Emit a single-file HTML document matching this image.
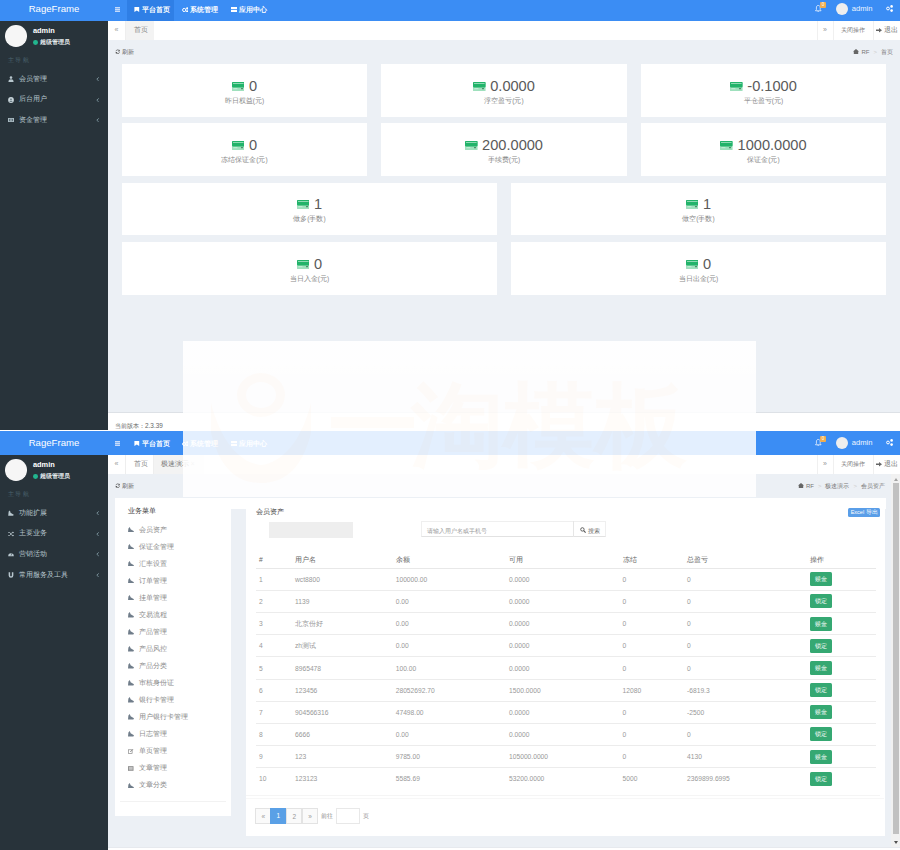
<!DOCTYPE html>
<html><head><meta charset="utf-8"><style>
*{margin:0;padding:0;box-sizing:border-box}
html,body{width:900px;height:850px;overflow:hidden;background:#fff;font-family:"Liberation Sans",sans-serif}
.clip{position:absolute;left:0;width:900px;overflow:hidden}
.scr{position:absolute;left:0;width:900px;height:440px;background:#ecf0f5}
.a{position:absolute;white-space:nowrap}
.hdr{position:absolute;left:0;top:0;width:900px;height:23.3px;background:#3b8df4}
.logo{position:absolute;left:0;top:0;width:108px;height:23.3px;color:#fff;font-size:9.6px;text-align:center;line-height:24px}
.navt{color:#fff;font-size:6.6px;line-height:8px;font-weight:bold}
.side{position:absolute;left:0;top:23.3px;width:108px;height:420px;background:#28333a}
.tabs{position:absolute;left:108px;top:23.3px;width:792px;height:19px;background:#fff}
.menu{color:#b8c7ce;font-size:6.6px;line-height:8px}
.foot{position:absolute;left:108px;top:415.1px;width:792px;height:20px;background:#fff;border-top:1px solid #dde1e6}
.card{position:absolute;background:#fff;height:52.5px}
.num{position:absolute;left:0;width:100%;text-align:center;top:12.8px;font-size:14.6px;color:#5a5a5a;line-height:18px}
.lbl{position:absolute;left:0;width:100%;text-align:center;top:32.5px;font-size:6.5px;color:#888;line-height:8px}
.ic{display:inline-block;width:12.6px;height:9.2px;vertical-align:0px;margin-right:4.5px}
.gray{color:#666}
</style></head><body>
<div class="clip" style="top:0;height:429.5px"><div class="scr" style="top:-2.8px"><div class="hdr"><div class="logo">RageFrame</div><svg class="a" style="left:114.7px;top:9.9px" width="5.7" height="5" viewBox="0 0 57 50"><rect y="0" width="57" height="14" fill="#c4dafb"/><rect y="18" width="57" height="14" fill="#c4dafb"/><rect y="36" width="57" height="14" fill="#c4dafb"/></svg><div class="a" style="left:127px;top:0;width:47px;height:23.3px;background:#2f7fe6"></div><svg class="a" style="left:134px;top:9.8px" width="5.6" height="5" viewBox="0 0 56 50"><path d="M4 0H52V50L28 36L4 50Z" fill="#fff"/></svg><div class="a navt" style="left:141.5px;top:8.6px">平台首页</div><svg class="a" style="left:181.6px;top:9.5px" width="6.7" height="5.5" viewBox="0 0 67 55"><circle cx="22" cy="30" r="16" fill="none" stroke="#fff" stroke-width="10"/><circle cx="52" cy="14" r="11" fill="#fff"/><circle cx="52" cy="44" r="11" fill="#fff"/></svg><div class="a navt" style="left:190.2px;top:8.6px">系统管理</div><svg class="a" style="left:230.5px;top:9.8px" width="6.5" height="5" viewBox="0 0 65 50"><rect x="0" y="0" width="65" height="21" fill="#fff"/><rect x="0" y="29" width="65" height="21" fill="#fff"/></svg><div class="a navt" style="left:238.7px;top:8.6px">应用中心</div><svg class="a" style="left:815px;top:7.8px" width="6.7" height="7.2" viewBox="0 0 67 72"><path d="M33 4C18 4 14 16 14 30V46L5 58H61L52 46V30C52 16 48 4 33 4Z" fill="none" stroke="#fff" stroke-width="7"/><path d="M25 62Q33 74 41 62" fill="none" stroke="#fff" stroke-width="7"/></svg><div class="a" style="left:820px;top:4.5px;width:6.1px;height:6.1px;background:#f0ad4e;border-radius:1px;color:#fff;font-size:4.5px;line-height:6px;text-align:center">0</div><div class="a" style="left:835.6px;top:5.8px;width:12.2px;height:12.2px;border-radius:50%;background:#eee"></div><div class="a" style="left:851.7px;top:7.1px;color:#eef5ff;font-size:7.6px;line-height:9px">admin</div><svg class="a" style="left:886px;top:8.2px" width="7.3" height="7" viewBox="0 0 73 70"><circle cx="20" cy="35" r="14" fill="none" stroke="#fff" stroke-width="10"/><circle cx="56" cy="14" r="13" fill="#fff"/><circle cx="56" cy="56" r="13" fill="#fff"/></svg></div><div class="side"></div><div class="a" style="left:5px;top:27.8px;width:21.5px;height:21.5px;border-radius:50%;background:#f6f6f6"></div><div class="a" style="left:33px;top:28.6px;color:#fff;font-size:7.4px;font-weight:bold;line-height:10px">admin</div><div class="a" style="left:33.2px;top:42.6px;width:4.8px;height:4.8px;border-radius:50%;background:#22b58e"></div><div class="a" style="left:40px;top:41px;color:#e8eef0;font-size:5.8px;line-height:8px;font-weight:bold">超级管理员</div><div class="a" style="left:8px;top:58.6px;color:#4b646f;font-size:5.6px;letter-spacing:1.4px;line-height:8px">主导航</div><svg class="a" style="left:7.8px;top:78.8px" width="6" height="6" viewBox="0 0 56 56"><circle cx="28" cy="15" r="12" fill="#b8c7ce"/><path d="M4 56C4 36 14 30 28 30C42 30 52 36 52 56Z" fill="#b8c7ce"/></svg><div class="a menu" style="left:19px;top:77.6px;font-size:6.6px">会员管理</div><svg class="a" style="left:96.2px;top:79.7px" width="3.4" height="4.4" viewBox="0 0 34 44"><path d="M28 4L8 22L28 40" fill="none" stroke="#8aa4af" stroke-width="8"/></svg><svg class="a" style="left:7.8px;top:99.4px" width="6" height="6" viewBox="0 0 56 56"><circle cx="28" cy="28" r="27" fill="#c8d4da"/><circle cx="28" cy="22" r="9" fill="#6d7f88"/><path d="M12 46C16 36 22 34 28 34C34 34 40 36 44 46Z" fill="#6d7f88"/></svg><div class="a menu" style="left:19px;top:98.2px;font-size:6.6px">后台用户</div><svg class="a" style="left:96.2px;top:100.3px" width="3.4" height="4.4" viewBox="0 0 34 44"><path d="M28 4L8 22L28 40" fill="none" stroke="#8aa4af" stroke-width="8"/></svg><svg class="a" style="left:7.8px;top:120.0px" width="6" height="6" viewBox="0 0 56 56"><rect x="0" y="10" width="56" height="36" fill="#b8c7ce"/><rect x="8" y="17" width="40" height="22" fill="#5d6f78"/><circle cx="28" cy="28" r="8" fill="#b8c7ce"/></svg><div class="a menu" style="left:19px;top:118.8px;font-size:6.6px">资金管理</div><svg class="a" style="left:96.2px;top:120.9px" width="3.4" height="4.4" viewBox="0 0 34 44"><path d="M28 4L8 22L28 40" fill="none" stroke="#8aa4af" stroke-width="8"/></svg><div class="tabs"></div><div class="a" style="left:108px;top:23.3px;width:18.3px;height:19px;border-right:1px solid #eee"></div><div class="a gray" style="left:114.5px;top:28.5px;font-size:7px;line-height:8px;color:#999">«</div><div class="a" style="left:126.3px;top:23.3px;width:27.6px;height:19px;background:#f3f3f3"></div><div class="a" style="left:133.5px;top:29px;font-size:6.6px;line-height:8px;color:#888">首页</div><div class="a" style="left:816.7px;top:23.3px;width:17.7px;height:19px;border-left:1px solid #f0f0f0;border-right:1px solid #f0f0f0"></div><div class="a" style="left:823px;top:28.5px;font-size:7px;line-height:8px;color:#999">»</div><div class="a" style="left:840.5px;top:29px;font-size:6.4px;line-height:8px;color:#777">关闭操作</div><div class="a" style="left:872.8px;top:23.3px;width:1px;height:19px;background:#f0f0f0"></div><svg class="a" style="left:876px;top:31px" width="6" height="4.5" viewBox="0 0 60 45"><path d="M0 14H30V0L60 22L30 45V31H0Z" fill="#666"/></svg><div class="a" style="left:883.5px;top:29px;font-size:6.6px;line-height:8px;color:#777">退出</div><svg class="a" style="left:115px;top:51.6px" width="5.5" height="5.5" viewBox="0 0 55 55"><path d="M46 20A20 20 0 0 0 9 22M9 35A20 20 0 0 0 46 33" fill="none" stroke="#555" stroke-width="7"/><path d="M46 6V24H30Z M9 49V31H25Z" fill="#555"/></svg><div class="a" style="left:122px;top:50.5px;font-size:6.4px;line-height:8px;color:#666">刷新</div><div class="a" style="right:7px;top:50.5px;font-size:6px;line-height:8px;color:#777;text-align:right"><svg width="6" height="5" viewBox="0 0 60 50" style="vertical-align:-0.5px;margin-right:2px"><path d="M30 0L60 26H52V50H8V26H0Z" fill="#666"/></svg>RF<span style="color:#ccc;margin:0 4px">&gt;</span><span>首页</span></div><div class="card" style="left:122px;top:66.8px;width:245px"><div class="num"><svg class="ic" viewBox="0 0 126 92"><rect x="0" y="0" width="126" height="92" rx="8" fill="#9fe0bd"/><rect x="0" y="0" width="126" height="54" rx="8" fill="#22b36a"/><rect x="10" y="10" width="106" height="6" fill="#d8f5e4"/><rect x="14" y="66" width="40" height="5" fill="#f0fff6"/><rect x="90" y="62" width="20" height="10" fill="#3a7a5a"/></svg>0</div><div class="lbl">昨日权益(元)</div></div><div class="card" style="left:381px;top:66.8px;width:246px"><div class="num"><svg class="ic" viewBox="0 0 126 92"><rect x="0" y="0" width="126" height="92" rx="8" fill="#9fe0bd"/><rect x="0" y="0" width="126" height="54" rx="8" fill="#22b36a"/><rect x="10" y="10" width="106" height="6" fill="#d8f5e4"/><rect x="14" y="66" width="40" height="5" fill="#f0fff6"/><rect x="90" y="62" width="20" height="10" fill="#3a7a5a"/></svg>0.0000</div><div class="lbl">浮空盈亏(元)</div></div><div class="card" style="left:641px;top:66.8px;width:245px"><div class="num"><svg class="ic" viewBox="0 0 126 92"><rect x="0" y="0" width="126" height="92" rx="8" fill="#9fe0bd"/><rect x="0" y="0" width="126" height="54" rx="8" fill="#22b36a"/><rect x="10" y="10" width="106" height="6" fill="#d8f5e4"/><rect x="14" y="66" width="40" height="5" fill="#f0fff6"/><rect x="90" y="62" width="20" height="10" fill="#3a7a5a"/></svg>-0.1000</div><div class="lbl">平仓盈亏(元)</div></div><div class="card" style="left:122px;top:126.1px;width:245px"><div class="num"><svg class="ic" viewBox="0 0 126 92"><rect x="0" y="0" width="126" height="92" rx="8" fill="#9fe0bd"/><rect x="0" y="0" width="126" height="54" rx="8" fill="#22b36a"/><rect x="10" y="10" width="106" height="6" fill="#d8f5e4"/><rect x="14" y="66" width="40" height="5" fill="#f0fff6"/><rect x="90" y="62" width="20" height="10" fill="#3a7a5a"/></svg>0</div><div class="lbl">冻结保证金(元)</div></div><div class="card" style="left:381px;top:126.1px;width:246px"><div class="num"><svg class="ic" viewBox="0 0 126 92"><rect x="0" y="0" width="126" height="92" rx="8" fill="#9fe0bd"/><rect x="0" y="0" width="126" height="54" rx="8" fill="#22b36a"/><rect x="10" y="10" width="106" height="6" fill="#d8f5e4"/><rect x="14" y="66" width="40" height="5" fill="#f0fff6"/><rect x="90" y="62" width="20" height="10" fill="#3a7a5a"/></svg>200.0000</div><div class="lbl">手续费(元)</div></div><div class="card" style="left:641px;top:126.1px;width:245px"><div class="num"><svg class="ic" viewBox="0 0 126 92"><rect x="0" y="0" width="126" height="92" rx="8" fill="#9fe0bd"/><rect x="0" y="0" width="126" height="54" rx="8" fill="#22b36a"/><rect x="10" y="10" width="106" height="6" fill="#d8f5e4"/><rect x="14" y="66" width="40" height="5" fill="#f0fff6"/><rect x="90" y="62" width="20" height="10" fill="#3a7a5a"/></svg>1000.0000</div><div class="lbl">保证金(元)</div></div><div class="card" style="left:122px;top:185.4px;width:375px"><div class="num"><svg class="ic" viewBox="0 0 126 92"><rect x="0" y="0" width="126" height="92" rx="8" fill="#9fe0bd"/><rect x="0" y="0" width="126" height="54" rx="8" fill="#22b36a"/><rect x="10" y="10" width="106" height="6" fill="#d8f5e4"/><rect x="14" y="66" width="40" height="5" fill="#f0fff6"/><rect x="90" y="62" width="20" height="10" fill="#3a7a5a"/></svg>1</div><div class="lbl">做多(手数)</div></div><div class="card" style="left:511px;top:185.4px;width:375px"><div class="num"><svg class="ic" viewBox="0 0 126 92"><rect x="0" y="0" width="126" height="92" rx="8" fill="#9fe0bd"/><rect x="0" y="0" width="126" height="54" rx="8" fill="#22b36a"/><rect x="10" y="10" width="106" height="6" fill="#d8f5e4"/><rect x="14" y="66" width="40" height="5" fill="#f0fff6"/><rect x="90" y="62" width="20" height="10" fill="#3a7a5a"/></svg>1</div><div class="lbl">做空(手数)</div></div><div class="card" style="left:122px;top:244.8px;width:375px"><div class="num"><svg class="ic" viewBox="0 0 126 92"><rect x="0" y="0" width="126" height="92" rx="8" fill="#9fe0bd"/><rect x="0" y="0" width="126" height="54" rx="8" fill="#22b36a"/><rect x="10" y="10" width="106" height="6" fill="#d8f5e4"/><rect x="14" y="66" width="40" height="5" fill="#f0fff6"/><rect x="90" y="62" width="20" height="10" fill="#3a7a5a"/></svg>0</div><div class="lbl">当日入金(元)</div></div><div class="card" style="left:511px;top:244.8px;width:375px"><div class="num"><svg class="ic" viewBox="0 0 126 92"><rect x="0" y="0" width="126" height="92" rx="8" fill="#9fe0bd"/><rect x="0" y="0" width="126" height="54" rx="8" fill="#22b36a"/><rect x="10" y="10" width="106" height="6" fill="#d8f5e4"/><rect x="14" y="66" width="40" height="5" fill="#f0fff6"/><rect x="90" y="62" width="20" height="10" fill="#3a7a5a"/></svg>0</div><div class="lbl">当日出金(元)</div></div><div class="foot"><div class="a" style="left:7px;top:8.3px;font-size:6.4px;line-height:8px;color:#666">当前版本：2.3.39</div></div></div></div><div class="clip" style="top:431.3px;height:418.7px"><div class="scr" style="top:0"><div class="hdr"><div class="logo">RageFrame</div><svg class="a" style="left:114.7px;top:9.9px" width="5.7" height="5" viewBox="0 0 57 50"><rect y="0" width="57" height="14" fill="#c4dafb"/><rect y="18" width="57" height="14" fill="#c4dafb"/><rect y="36" width="57" height="14" fill="#c4dafb"/></svg><svg class="a" style="left:134px;top:9.8px" width="5.6" height="5" viewBox="0 0 56 50"><path d="M4 0H52V50L28 36L4 50Z" fill="#fff"/></svg><div class="a navt" style="left:141.5px;top:8.6px">平台首页</div><svg class="a" style="left:181.6px;top:9.5px" width="6.7" height="5.5" viewBox="0 0 67 55"><circle cx="22" cy="30" r="16" fill="none" stroke="#fff" stroke-width="10"/><circle cx="52" cy="14" r="11" fill="#fff"/><circle cx="52" cy="44" r="11" fill="#fff"/></svg><div class="a navt" style="left:190.2px;top:8.6px">系统管理</div><svg class="a" style="left:230.5px;top:9.8px" width="6.5" height="5" viewBox="0 0 65 50"><rect x="0" y="0" width="65" height="21" fill="#fff"/><rect x="0" y="29" width="65" height="21" fill="#fff"/></svg><div class="a navt" style="left:238.7px;top:8.6px">应用中心</div><svg class="a" style="left:815px;top:7.8px" width="6.7" height="7.2" viewBox="0 0 67 72"><path d="M33 4C18 4 14 16 14 30V46L5 58H61L52 46V30C52 16 48 4 33 4Z" fill="none" stroke="#fff" stroke-width="7"/><path d="M25 62Q33 74 41 62" fill="none" stroke="#fff" stroke-width="7"/></svg><div class="a" style="left:820px;top:4.5px;width:6.1px;height:6.1px;background:#f0ad4e;border-radius:1px;color:#fff;font-size:4.5px;line-height:6px;text-align:center">0</div><div class="a" style="left:835.6px;top:5.8px;width:12.2px;height:12.2px;border-radius:50%;background:#eee"></div><div class="a" style="left:851.7px;top:7.1px;color:#eef5ff;font-size:7.6px;line-height:9px">admin</div><svg class="a" style="left:886px;top:8.2px" width="7.3" height="7" viewBox="0 0 73 70"><circle cx="20" cy="35" r="14" fill="none" stroke="#fff" stroke-width="10"/><circle cx="56" cy="14" r="13" fill="#fff"/><circle cx="56" cy="56" r="13" fill="#fff"/></svg></div><div class="side"></div><div class="a" style="left:5px;top:27.8px;width:21.5px;height:21.5px;border-radius:50%;background:#f6f6f6"></div><div class="a" style="left:33px;top:28.6px;color:#fff;font-size:7.4px;font-weight:bold;line-height:10px">admin</div><div class="a" style="left:33.2px;top:42.6px;width:4.8px;height:4.8px;border-radius:50%;background:#22b58e"></div><div class="a" style="left:40px;top:41px;color:#e8eef0;font-size:5.8px;line-height:8px;font-weight:bold">超级管理员</div><div class="a" style="left:8px;top:58.6px;color:#4b646f;font-size:5.6px;letter-spacing:1.4px;line-height:8px">主导航</div><svg class="a" style="left:7.8px;top:78.8px" width="6" height="6" viewBox="0 0 56 56"><path d="M2 54L6 14L18 4L24 26L54 44L48 54Z" fill="#b8c7ce"/></svg><div class="a menu" style="left:19px;top:77.6px;font-size:6.6px">功能扩展</div><svg class="a" style="left:96.2px;top:79.7px" width="3.4" height="4.4" viewBox="0 0 34 44"><path d="M28 4L8 22L28 40" fill="none" stroke="#8aa4af" stroke-width="8"/></svg><svg class="a" style="left:7.8px;top:99.4px" width="6" height="6" viewBox="0 0 56 56"><path d="M2 14H16L38 42H48M2 42H16L38 14H48" fill="none" stroke="#b8c7ce" stroke-width="7"/><path d="M44 4L56 14L44 24Z M44 32L56 42L44 52Z" fill="#b8c7ce"/></svg><div class="a menu" style="left:19px;top:98.2px;font-size:6.6px">主要业务</div><svg class="a" style="left:96.2px;top:100.3px" width="3.4" height="4.4" viewBox="0 0 34 44"><path d="M28 4L8 22L28 40" fill="none" stroke="#8aa4af" stroke-width="8"/></svg><svg class="a" style="left:7.8px;top:120.0px" width="6" height="6" viewBox="0 0 56 56"><path d="M2 48A26 26 0 1 1 54 48Z" fill="#b8c7ce"/><path d="M28 44L38 20" stroke="#28333a" stroke-width="5"/></svg><div class="a menu" style="left:19px;top:118.8px;font-size:6.6px">营销活动</div><svg class="a" style="left:96.2px;top:120.9px" width="3.4" height="4.4" viewBox="0 0 34 44"><path d="M28 4L8 22L28 40" fill="none" stroke="#8aa4af" stroke-width="8"/></svg><svg class="a" style="left:7.8px;top:140.6px" width="6" height="6" viewBox="0 0 56 56"><path d="M6 2V32A22 22 0 0 0 50 32V2H36V32A8 8 0 0 1 20 32V2Z" fill="#b8c7ce"/></svg><div class="a menu" style="left:19px;top:139.4px;font-size:6.6px">常用服务及工具</div><svg class="a" style="left:96.2px;top:141.5px" width="3.4" height="4.4" viewBox="0 0 34 44"><path d="M28 4L8 22L28 40" fill="none" stroke="#8aa4af" stroke-width="8"/></svg><div class="tabs"></div><div class="a" style="left:108px;top:23.3px;width:18.3px;height:19px;border-right:1px solid #eee"></div><div class="a gray" style="left:114.5px;top:28.5px;font-size:7px;line-height:8px;color:#999">«</div><div class="a" style="left:126.3px;top:23.3px;width:27.6px;height:19px;border-right:1px solid #eee"></div><div class="a" style="left:133.5px;top:29px;font-size:6.6px;line-height:8px;color:#888">首页</div><div class="a" style="left:153.9px;top:23.3px;width:50px;height:19px;background:#f3f3f3"></div><div class="a" style="left:161px;top:29px;font-size:6.6px;line-height:8px;color:#777">极速演示 <span style="color:#bbb">×</span></div><div class="a" style="left:816.7px;top:23.3px;width:17.7px;height:19px;border-left:1px solid #f0f0f0;border-right:1px solid #f0f0f0"></div><div class="a" style="left:823px;top:28.5px;font-size:7px;line-height:8px;color:#999">»</div><div class="a" style="left:840.5px;top:29px;font-size:6.4px;line-height:8px;color:#777">关闭操作</div><div class="a" style="left:872.8px;top:23.3px;width:1px;height:19px;background:#f0f0f0"></div><svg class="a" style="left:876px;top:31px" width="6" height="4.5" viewBox="0 0 60 45"><path d="M0 14H30V0L60 22L30 45V31H0Z" fill="#666"/></svg><div class="a" style="left:883.5px;top:29px;font-size:6.6px;line-height:8px;color:#777">退出</div><svg class="a" style="left:115px;top:51.6px" width="5.5" height="5.5" viewBox="0 0 55 55"><path d="M46 20A20 20 0 0 0 9 22M9 35A20 20 0 0 0 46 33" fill="none" stroke="#555" stroke-width="7"/><path d="M46 6V24H30Z M9 49V31H25Z" fill="#555"/></svg><div class="a" style="left:122px;top:50.5px;font-size:6.4px;line-height:8px;color:#666">刷新</div><div class="a" style="right:15px;top:50.5px;font-size:6px;line-height:8px;color:#777;text-align:right"><svg width="6" height="5" viewBox="0 0 60 50" style="vertical-align:-0.5px;margin-right:2px"><path d="M30 0L60 26H52V50H8V26H0Z" fill="#666"/></svg>RF<span style="color:#ccc;margin:0 4px">&gt;</span><span>极速演示</span><span style="color:#ccc;margin:0 4px">&gt;</span><span>会员资产</span></div><div class="a" style="left:115px;top:67.2px;width:770.5px;height:10.5px;background:#fff"></div><div class="a" style="left:115px;top:67.2px;width:116px;height:317.1px;background:#fff"></div><div class="a" style="left:128px;top:76px;font-size:6.6px;line-height:8px;color:#444">业务菜单</div><div class="a" style="left:128px;top:94.3px;width:100px;height:8px"><svg width="6" height="5.4" viewBox="0 0 60 54" style="position:absolute;left:0;top:1.3px"><path d="M0 54L4 14L18 0L26 22L60 42L54 54Z" fill="#707d8a"/></svg><div class="a" style="left:11px;top:0;font-size:6.5px;line-height:8px;color:#8a8a8a">会员资产</div></div><div class="a" style="left:128px;top:111.3px;width:100px;height:8px"><svg width="6" height="5.4" viewBox="0 0 60 54" style="position:absolute;left:0;top:1.3px"><path d="M0 54L4 14L18 0L26 22L60 42L54 54Z" fill="#707d8a"/></svg><div class="a" style="left:11px;top:0;font-size:6.5px;line-height:8px;color:#8a8a8a">保证金管理</div></div><div class="a" style="left:128px;top:128.4px;width:100px;height:8px"><svg width="6" height="5.4" viewBox="0 0 60 54" style="position:absolute;left:0;top:1.3px"><path d="M0 54L4 14L18 0L26 22L60 42L54 54Z" fill="#707d8a"/></svg><div class="a" style="left:11px;top:0;font-size:6.5px;line-height:8px;color:#8a8a8a">汇率设置</div></div><div class="a" style="left:128px;top:145.5px;width:100px;height:8px"><svg width="6" height="5.4" viewBox="0 0 60 54" style="position:absolute;left:0;top:1.3px"><path d="M0 54L4 14L18 0L26 22L60 42L54 54Z" fill="#707d8a"/></svg><div class="a" style="left:11px;top:0;font-size:6.5px;line-height:8px;color:#8a8a8a">订单管理</div></div><div class="a" style="left:128px;top:162.5px;width:100px;height:8px"><svg width="6" height="5.4" viewBox="0 0 60 54" style="position:absolute;left:0;top:1.3px"><path d="M0 54L4 14L18 0L26 22L60 42L54 54Z" fill="#707d8a"/></svg><div class="a" style="left:11px;top:0;font-size:6.5px;line-height:8px;color:#8a8a8a">挂单管理</div></div><div class="a" style="left:128px;top:179.6px;width:100px;height:8px"><svg width="6" height="5.4" viewBox="0 0 60 54" style="position:absolute;left:0;top:1.3px"><path d="M0 54L4 14L18 0L26 22L60 42L54 54Z" fill="#707d8a"/></svg><div class="a" style="left:11px;top:0;font-size:6.5px;line-height:8px;color:#8a8a8a">交易流程</div></div><div class="a" style="left:128px;top:196.6px;width:100px;height:8px"><svg width="6" height="5.4" viewBox="0 0 60 54" style="position:absolute;left:0;top:1.3px"><path d="M0 54L4 14L18 0L26 22L60 42L54 54Z" fill="#707d8a"/></svg><div class="a" style="left:11px;top:0;font-size:6.5px;line-height:8px;color:#8a8a8a">产品管理</div></div><div class="a" style="left:128px;top:213.7px;width:100px;height:8px"><svg width="6" height="5.4" viewBox="0 0 60 54" style="position:absolute;left:0;top:1.3px"><path d="M0 54L4 14L18 0L26 22L60 42L54 54Z" fill="#707d8a"/></svg><div class="a" style="left:11px;top:0;font-size:6.5px;line-height:8px;color:#8a8a8a">产品风控</div></div><div class="a" style="left:128px;top:230.7px;width:100px;height:8px"><svg width="6" height="5.4" viewBox="0 0 60 54" style="position:absolute;left:0;top:1.3px"><path d="M0 54L4 14L18 0L26 22L60 42L54 54Z" fill="#707d8a"/></svg><div class="a" style="left:11px;top:0;font-size:6.5px;line-height:8px;color:#8a8a8a">产品分类</div></div><div class="a" style="left:128px;top:247.8px;width:100px;height:8px"><svg width="6" height="5.4" viewBox="0 0 60 54" style="position:absolute;left:0;top:1.3px"><path d="M0 54L4 14L18 0L26 22L60 42L54 54Z" fill="#707d8a"/></svg><div class="a" style="left:11px;top:0;font-size:6.5px;line-height:8px;color:#8a8a8a">审核身份证</div></div><div class="a" style="left:128px;top:264.8px;width:100px;height:8px"><svg width="6" height="5.4" viewBox="0 0 60 54" style="position:absolute;left:0;top:1.3px"><path d="M0 54L4 14L18 0L26 22L60 42L54 54Z" fill="#707d8a"/></svg><div class="a" style="left:11px;top:0;font-size:6.5px;line-height:8px;color:#8a8a8a">银行卡管理</div></div><div class="a" style="left:128px;top:281.9px;width:100px;height:8px"><svg width="6" height="5.4" viewBox="0 0 60 54" style="position:absolute;left:0;top:1.3px"><path d="M0 54L4 14L18 0L26 22L60 42L54 54Z" fill="#707d8a"/></svg><div class="a" style="left:11px;top:0;font-size:6.5px;line-height:8px;color:#8a8a8a">用户银行卡管理</div></div><div class="a" style="left:128px;top:298.9px;width:100px;height:8px"><svg width="6" height="5.4" viewBox="0 0 60 54" style="position:absolute;left:0;top:1.3px"><path d="M0 54L4 14L18 0L26 22L60 42L54 54Z" fill="#707d8a"/></svg><div class="a" style="left:11px;top:0;font-size:6.5px;line-height:8px;color:#8a8a8a">日志管理</div></div><div class="a" style="left:128px;top:316.0px;width:100px;height:8px"><svg width="5.5" height="5" viewBox="0 0 55 50" style="position:absolute;left:0;top:1.5px"><rect x="3" y="8" width="38" height="38" fill="none" stroke="#777" stroke-width="6"/><path d="M22 30L50 2" stroke="#777" stroke-width="8"/></svg><div class="a" style="left:11px;top:0;font-size:6.5px;line-height:8px;color:#8a8a8a">单页管理</div></div><div class="a" style="left:128px;top:333.0px;width:100px;height:8px"><svg width="5.5" height="5" viewBox="0 0 55 50" style="position:absolute;left:0;top:1.5px"><rect x="0" y="2" width="55" height="46" fill="#888"/><rect x="8" y="12" width="39" height="5" fill="#fff"/><rect x="8" y="24" width="39" height="5" fill="#fff"/><rect x="8" y="36" width="39" height="5" fill="#fff"/></svg><div class="a" style="left:11px;top:0;font-size:6.5px;line-height:8px;color:#8a8a8a">文章管理</div></div><div class="a" style="left:128px;top:350.1px;width:100px;height:8px"><svg width="6" height="5.4" viewBox="0 0 60 54" style="position:absolute;left:0;top:1.3px"><path d="M0 54L4 14L18 0L26 22L60 42L54 54Z" fill="#707d8a"/></svg><div class="a" style="left:11px;top:0;font-size:6.5px;line-height:8px;color:#8a8a8a">文章分类</div></div><div class="a" style="left:120px;top:369.7px;width:106px;height:1px;background:#f2f2f2"></div><div class="a" style="left:245.6px;top:67.2px;width:639.9px;height:337.8px;background:#fff"></div><div class="a" style="left:255.6px;top:76.7px;font-size:6.8px;line-height:8px;color:#444">会员资产</div><div class="a" style="left:848.4px;top:76.5px;width:31.6px;height:9.3px;background:#5a9ee8;border-radius:1.5px;color:#fff;font-size:5.5px;line-height:9.3px;text-align:center">Excel 导出</div><div class="a" style="left:268.9px;top:90.3px;width:84.4px;height:16.2px;background:#eeeeee"></div><div class="a" style="left:420.5px;top:89.9px;width:185px;height:16.3px;border:1px solid #efefef;border-bottom-color:#e2e2e2;background:#fff"></div><div class="a" style="left:573.3px;top:89.9px;width:1px;height:16.3px;background:#e6e6e6"></div><div class="a" style="left:427px;top:95.4px;font-size:6.2px;line-height:8px;color:#999">请输入用户名或手机号</div><svg class="a" style="left:579.8px;top:96.2px" width="6" height="6" viewBox="0 0 60 60"><circle cx="24" cy="24" r="17" fill="none" stroke="#555" stroke-width="9"/><path d="M37 37L56 56" stroke="#555" stroke-width="11"/></svg><div class="a" style="left:587.5px;top:95.4px;font-size:6.2px;line-height:8px;color:#666">搜索</div><div class="a" style="left:259px;top:124.7px;font-size:6.7px;line-height:8px;color:#666">#</div><div class="a" style="left:295px;top:124.7px;font-size:6.7px;line-height:8px;color:#666">用户名</div><div class="a" style="left:395.7px;top:124.7px;font-size:6.7px;line-height:8px;color:#666">余额</div><div class="a" style="left:509px;top:124.7px;font-size:6.7px;line-height:8px;color:#666">可用</div><div class="a" style="left:622.5px;top:124.7px;font-size:6.7px;line-height:8px;color:#666">冻结</div><div class="a" style="left:687px;top:124.7px;font-size:6.7px;line-height:8px;color:#666">总盈亏</div><div class="a" style="left:810px;top:124.7px;font-size:6.7px;line-height:8px;color:#666">操作</div><div class="a" style="left:255.6px;top:136.6px;width:620px;height:1px;background:#e8e8e8"></div><div class="a" style="left:259px;top:144.8px;font-size:6.7px;line-height:8px;color:#999">1</div><div class="a" style="left:295px;top:144.8px;font-size:6.7px;line-height:8px;color:#999">wct8800</div><div class="a" style="left:395.7px;top:144.8px;font-size:6.7px;line-height:8px;color:#999">100000.00</div><div class="a" style="left:509px;top:144.8px;font-size:6.7px;line-height:8px;color:#999">0.0000</div><div class="a" style="left:622.5px;top:144.8px;font-size:6.7px;line-height:8px;color:#999">0</div><div class="a" style="left:687px;top:144.8px;font-size:6.7px;line-height:8px;color:#999">0</div><div class="a" style="left:810.1px;top:141.1px;width:21.6px;height:14px;background:#35a872;border-radius:1.5px;color:#fff;font-size:5.6px;line-height:14px;text-align:center">赎金</div><div class="a" style="left:255.6px;top:158.7px;width:620px;height:1px;background:#ececec"></div><div class="a" style="left:259px;top:166.9px;font-size:6.7px;line-height:8px;color:#999">2</div><div class="a" style="left:295px;top:166.9px;font-size:6.7px;line-height:8px;color:#999">1139</div><div class="a" style="left:395.7px;top:166.9px;font-size:6.7px;line-height:8px;color:#999">0.00</div><div class="a" style="left:509px;top:166.9px;font-size:6.7px;line-height:8px;color:#999">0.0000</div><div class="a" style="left:622.5px;top:166.9px;font-size:6.7px;line-height:8px;color:#999">0</div><div class="a" style="left:687px;top:166.9px;font-size:6.7px;line-height:8px;color:#999">0</div><div class="a" style="left:810.1px;top:163.2px;width:21.6px;height:14px;background:#35a872;border-radius:1.5px;color:#fff;font-size:5.6px;line-height:14px;text-align:center">锁定</div><div class="a" style="left:255.6px;top:180.8px;width:620px;height:1px;background:#ececec"></div><div class="a" style="left:259px;top:189.1px;font-size:6.7px;line-height:8px;color:#999">3</div><div class="a" style="left:295px;top:189.1px;font-size:6.7px;line-height:8px;color:#999">北京份好</div><div class="a" style="left:395.7px;top:189.1px;font-size:6.7px;line-height:8px;color:#999">0.00</div><div class="a" style="left:509px;top:189.1px;font-size:6.7px;line-height:8px;color:#999">0.0000</div><div class="a" style="left:622.5px;top:189.1px;font-size:6.7px;line-height:8px;color:#999">0</div><div class="a" style="left:687px;top:189.1px;font-size:6.7px;line-height:8px;color:#999">0</div><div class="a" style="left:810.1px;top:185.4px;width:21.6px;height:14px;background:#35a872;border-radius:1.5px;color:#fff;font-size:5.6px;line-height:14px;text-align:center">赎金</div><div class="a" style="left:255.6px;top:203.0px;width:620px;height:1px;background:#ececec"></div><div class="a" style="left:259px;top:211.2px;font-size:6.7px;line-height:8px;color:#999">4</div><div class="a" style="left:295px;top:211.2px;font-size:6.7px;line-height:8px;color:#999">zh测试</div><div class="a" style="left:395.7px;top:211.2px;font-size:6.7px;line-height:8px;color:#999">0.00</div><div class="a" style="left:509px;top:211.2px;font-size:6.7px;line-height:8px;color:#999">0.0000</div><div class="a" style="left:622.5px;top:211.2px;font-size:6.7px;line-height:8px;color:#999">0</div><div class="a" style="left:687px;top:211.2px;font-size:6.7px;line-height:8px;color:#999">0</div><div class="a" style="left:810.1px;top:207.5px;width:21.6px;height:14px;background:#35a872;border-radius:1.5px;color:#fff;font-size:5.6px;line-height:14px;text-align:center">锁定</div><div class="a" style="left:255.6px;top:225.1px;width:620px;height:1px;background:#ececec"></div><div class="a" style="left:259px;top:233.4px;font-size:6.7px;line-height:8px;color:#999">5</div><div class="a" style="left:295px;top:233.4px;font-size:6.7px;line-height:8px;color:#999">8965478</div><div class="a" style="left:395.7px;top:233.4px;font-size:6.7px;line-height:8px;color:#999">100.00</div><div class="a" style="left:509px;top:233.4px;font-size:6.7px;line-height:8px;color:#999">0.0000</div><div class="a" style="left:622.5px;top:233.4px;font-size:6.7px;line-height:8px;color:#999">0</div><div class="a" style="left:687px;top:233.4px;font-size:6.7px;line-height:8px;color:#999">0</div><div class="a" style="left:810.1px;top:229.7px;width:21.6px;height:14px;background:#35a872;border-radius:1.5px;color:#fff;font-size:5.6px;line-height:14px;text-align:center">赎金</div><div class="a" style="left:255.6px;top:247.3px;width:620px;height:1px;background:#ececec"></div><div class="a" style="left:259px;top:255.6px;font-size:6.7px;line-height:8px;color:#999">6</div><div class="a" style="left:295px;top:255.6px;font-size:6.7px;line-height:8px;color:#999">123456</div><div class="a" style="left:395.7px;top:255.6px;font-size:6.7px;line-height:8px;color:#999">28052692.70</div><div class="a" style="left:509px;top:255.6px;font-size:6.7px;line-height:8px;color:#999">1500.0000</div><div class="a" style="left:622.5px;top:255.6px;font-size:6.7px;line-height:8px;color:#999">12080</div><div class="a" style="left:687px;top:255.6px;font-size:6.7px;line-height:8px;color:#999">-6819.3</div><div class="a" style="left:810.1px;top:251.9px;width:21.6px;height:14px;background:#35a872;border-radius:1.5px;color:#fff;font-size:5.6px;line-height:14px;text-align:center">锁定</div><div class="a" style="left:255.6px;top:269.5px;width:620px;height:1px;background:#ececec"></div><div class="a" style="left:259px;top:277.7px;font-size:6.7px;line-height:8px;color:#999">7</div><div class="a" style="left:295px;top:277.7px;font-size:6.7px;line-height:8px;color:#999">904566316</div><div class="a" style="left:395.7px;top:277.7px;font-size:6.7px;line-height:8px;color:#999">47498.00</div><div class="a" style="left:509px;top:277.7px;font-size:6.7px;line-height:8px;color:#999">0.0000</div><div class="a" style="left:622.5px;top:277.7px;font-size:6.7px;line-height:8px;color:#999">0</div><div class="a" style="left:687px;top:277.7px;font-size:6.7px;line-height:8px;color:#999">-2500</div><div class="a" style="left:810.1px;top:274.0px;width:21.6px;height:14px;background:#35a872;border-radius:1.5px;color:#fff;font-size:5.6px;line-height:14px;text-align:center">赎金</div><div class="a" style="left:255.6px;top:291.6px;width:620px;height:1px;background:#ececec"></div><div class="a" style="left:259px;top:299.8px;font-size:6.7px;line-height:8px;color:#999">8</div><div class="a" style="left:295px;top:299.8px;font-size:6.7px;line-height:8px;color:#999">6666</div><div class="a" style="left:395.7px;top:299.8px;font-size:6.7px;line-height:8px;color:#999">0.00</div><div class="a" style="left:509px;top:299.8px;font-size:6.7px;line-height:8px;color:#999">0.0000</div><div class="a" style="left:622.5px;top:299.8px;font-size:6.7px;line-height:8px;color:#999">0</div><div class="a" style="left:687px;top:299.8px;font-size:6.7px;line-height:8px;color:#999">0</div><div class="a" style="left:810.1px;top:296.1px;width:21.6px;height:14px;background:#35a872;border-radius:1.5px;color:#fff;font-size:5.6px;line-height:14px;text-align:center">锁定</div><div class="a" style="left:255.6px;top:313.8px;width:620px;height:1px;background:#ececec"></div><div class="a" style="left:259px;top:322.0px;font-size:6.7px;line-height:8px;color:#999">9</div><div class="a" style="left:295px;top:322.0px;font-size:6.7px;line-height:8px;color:#999">123</div><div class="a" style="left:395.7px;top:322.0px;font-size:6.7px;line-height:8px;color:#999">9785.00</div><div class="a" style="left:509px;top:322.0px;font-size:6.7px;line-height:8px;color:#999">105000.0000</div><div class="a" style="left:622.5px;top:322.0px;font-size:6.7px;line-height:8px;color:#999">0</div><div class="a" style="left:687px;top:322.0px;font-size:6.7px;line-height:8px;color:#999">4130</div><div class="a" style="left:810.1px;top:318.3px;width:21.6px;height:14px;background:#35a872;border-radius:1.5px;color:#fff;font-size:5.6px;line-height:14px;text-align:center">赎金</div><div class="a" style="left:255.6px;top:335.9px;width:620px;height:1px;background:#ececec"></div><div class="a" style="left:259px;top:344.1px;font-size:6.7px;line-height:8px;color:#999">10</div><div class="a" style="left:295px;top:344.1px;font-size:6.7px;line-height:8px;color:#999">123123</div><div class="a" style="left:395.7px;top:344.1px;font-size:6.7px;line-height:8px;color:#999">5585.69</div><div class="a" style="left:509px;top:344.1px;font-size:6.7px;line-height:8px;color:#999">53200.0000</div><div class="a" style="left:622.5px;top:344.1px;font-size:6.7px;line-height:8px;color:#999">5000</div><div class="a" style="left:687px;top:344.1px;font-size:6.7px;line-height:8px;color:#999">2369899.6995</div><div class="a" style="left:810.1px;top:340.4px;width:21.6px;height:14px;background:#35a872;border-radius:1.5px;color:#fff;font-size:5.6px;line-height:14px;text-align:center">锁定</div><div class="a" style="left:245.6px;top:363.4px;width:634.4px;height:1px;background:#f5f5f5"></div><div class="a" style="left:245.6px;top:367.1px;width:638px;height:1px;background:#f7f7f7"></div><div class="a" style="left:255.3px;top:376.7px;width:15.8px;height:16.2px;border:0.8px solid #e3e3e3;background:#fafafa;color:#999;font-size:6.5px;line-height:15px;text-align:center">«</div><div class="a" style="left:270.3px;top:376.7px;width:15.9px;height:16.2px;background:#5aa0e6;color:#fff;font-size:6.5px;line-height:16.2px;text-align:center">1</div><div class="a" style="left:286.2px;top:376.7px;width:16.3px;height:16.2px;border:0.8px solid #e3e3e3;background:#fafafa;color:#999;font-size:6.5px;line-height:15px;text-align:center">2</div><div class="a" style="left:301.7px;top:376.7px;width:16.6px;height:16.2px;border:0.8px solid #e3e3e3;background:#fafafa;color:#999;font-size:6.5px;line-height:15px;text-align:center">»</div><div class="a" style="left:321px;top:380.9px;font-size:6.2px;line-height:8px;color:#888">前往</div><div class="a" style="left:336.3px;top:376.7px;width:23.7px;height:16.2px;border:0.8px solid #e8e8e8;background:#fff"></div><div class="a" style="left:363px;top:380.9px;font-size:6.2px;line-height:8px;color:#888">页</div><div class="a" style="left:891px;top:42.9px;width:9px;height:372.8px;background:#f1f1f1"></div><div class="a" style="left:892.8px;top:51.3px;width:6px;height:351.4px;background:#c1c1c1"></div><svg class="a" style="left:893.5px;top:46.5px" width="4" height="3" viewBox="0 0 4 3"><path d="M0 3L2 0L4 3Z" fill="#a3a3a3"/></svg><svg class="a" style="left:893.5px;top:409.5px" width="4" height="3" viewBox="0 0 4 3"><path d="M0 0L2 3L4 0Z" fill="#505050"/></svg><div class="foot" style="top:416px;border-top-color:#e6e9ee"></div></div></div><div class="a" style="left:183px;top:341.2px;width:573px;height:155.4px;background:rgba(255,255,255,0.86);overflow:hidden"><div class="a" style="left:0;top:0;width:573px;height:40px;background:linear-gradient(rgba(255,255,255,0.6) 0,rgba(255,255,255,0.6) 22px,rgba(255,255,255,0) 40px)"></div><div class="a" style="left:54px;top:32px;width:48px;height:44px;border-radius:50%;border:9px solid rgba(255,160,60,0.03)"></div><svg class="a" style="left:28px;top:62px" width="100" height="80" viewBox="0 0 100 80"><path d="M0 0C10 40 30 60 50 62C70 60 90 40 100 0L100 30C90 70 70 80 50 80C30 80 10 70 0 30Z" fill="rgba(255,160,60,0.03)"/></svg><div class="a" style="left:148px;top:76px;width:83px;height:11px;background:rgba(255,160,60,0.03)"></div><div class="a" style="left:228px;top:34px;font-size:92px;line-height:100px;font-weight:bold;color:rgba(255,160,60,0.03)">淘模板</div></div>
</body></html>
